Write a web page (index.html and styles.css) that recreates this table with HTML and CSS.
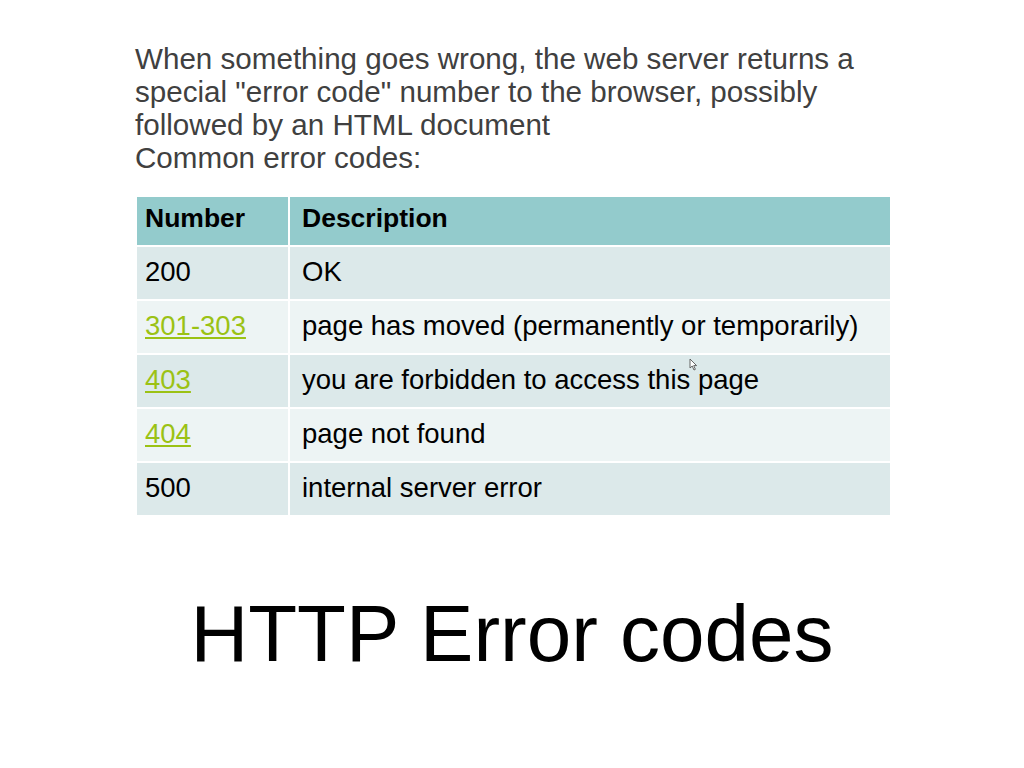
FILE: index.html
```html
<!DOCTYPE html>
<html lang="en">
<head>
  <meta charset="UTF-8" />
  <title>HTTP Error codes</title>
  <link rel="stylesheet" href="styles.css">
</head>
<body>
  <div class="slide">
    <p class="intro">
      When something goes wrong, the web server returns a<br>
      special "error code" number to the browser, possibly<br>
      followed by an HTML document<br>
      Common error codes:
    </p>

    <table class="codes">
      <thead>
        <tr><th class="num">Number</th><th>Description</th></tr>
      </thead>
      <tbody>
        <tr><td class="num">200</td><td>OK</td></tr>
        <tr><td class="num"><a href="#">301-303</a></td><td>page has moved (permanently or temporarily)</td></tr>
        <tr><td class="num"><a href="#">403</a></td><td>you are forbidden to access this page</td></tr>
        <tr><td class="num"><a href="#">404</a></td><td>page not found</td></tr>
        <tr><td class="num">500</td><td>internal server error</td></tr>
      </tbody>
    </table>

    <h1 class="title">HTTP Error codes</h1>

    <svg class="cursor" width="9" height="13" viewBox="0 0 9 13">
      <path d="M1 1 L1 10 L3.2 8 L5 12 L6.4 11.3 L4.7 7.6 L7.6 7.6 Z" fill="#fff" stroke="#555" stroke-width="0.9"/>
    </svg>
  </div>
</body>
</html>
```

FILE: styles.css
```css
body {
  margin: 0;
  background: #ffffff;
  font-family: 'Liberation Sans', Arial, sans-serif;
}

.slide {
  position: relative;
  width: 1024px;
  height: 768px;
  overflow: hidden;
}

.intro {
  margin: 0;
  padding: 42px 0 0 135px;
  font-size: 29.6px;
  line-height: 33px;
  color: #404040;
}

.codes {
  margin: 23px 0 0 137px;
  width: 753px;
  border-collapse: separate;
  border-spacing: 0;
  font-size: 27.5px;
  line-height: 32px;
  color: #000;
}

.codes th,
.codes td {
  text-align: left;
  padding: 9px 0 11px 12px;
  border-bottom: 2px solid #fff;
}

.codes th {
  padding-top: 5px;
  padding-bottom: 11px;
  background: #93cbcc;
  font-weight: bold;
  font-size: 26.5px;
}

.codes .num {
  width: 143px;
  padding-left: 8px;
  border-right: 2px solid #fff;
}

.codes tbody tr:nth-child(odd) td {
  background: #dce9ea;
}

.codes tbody tr:nth-child(even) td {
  background: #edf4f4;
}

.codes tbody tr:last-child td {
  border-bottom: none;
}

.codes a {
  color: #9bc214;
  text-decoration: underline;
}

.title {
  margin: 79px 0 0;
  text-align: center;
  font-size: 80px;
  font-weight: normal;
  line-height: 1;
  color: #000;
}

.cursor {
  position: absolute;
  left: 689px;
  top: 358px;
}
```
